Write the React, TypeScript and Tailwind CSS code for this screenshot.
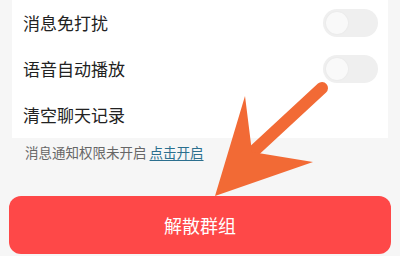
const font = { fontFamily: '"Noto Sans CJK SC", "Noto Sans", sans-serif' };

const Toggle = () => (
  <div className="w-[55px] h-[28px] rounded-full bg-[#efefef] p-[3px] flex items-center">
    <div className="w-[22px] h-[22px] rounded-full bg-[#f9f9f9] shadow-[0_0_2px_rgba(0,0,0,0.06)]" />
  </div>
);

const Row = ({ label, toggle }: { label: string; toggle?: boolean }) => (
  <div className="h-[46px] flex items-center justify-between pl-[11px] pr-[10px]">
    <span className="text-[17px] text-[#222]">{label}</span>
    {toggle && <Toggle />}
  </div>
);

export default function App() {
  return (
    <div
      className="relative w-[400px] h-[256px] bg-[#f6f6f6] overflow-hidden flex flex-col"
      style={font}
    >
      <div className="mx-3 bg-white">
        <Row label="消息免打扰" toggle />
        <Row label="语音自动播放" toggle />
        <Row label="清空聊天记录" />
      </div>
      <div className="mt-[5px] pl-[25px] text-[13.5px] text-[#666] leading-[18px]">
        消息通知权限未开启{" "}
        <span className="text-[#2b6f8e] underline underline-offset-2">点击开启</span>
      </div>
      <button className="mt-auto mb-[2px] mx-[9px] h-[58px] rounded-[12px] bg-[#fe4848] text-white text-[18px] flex items-center justify-center">
        解散群组
      </button>
      <svg className="absolute inset-0" width="400" height="256" viewBox="0 0 400 256">
        <line x1="322" y1="88" x2="255" y2="150" stroke="#f26a35" strokeWidth="12" strokeLinecap="round" />
        <polygon points="245,96 252,152 313,162 215,196" fill="#f26a35" />
      </svg>
    </div>
  );
}
